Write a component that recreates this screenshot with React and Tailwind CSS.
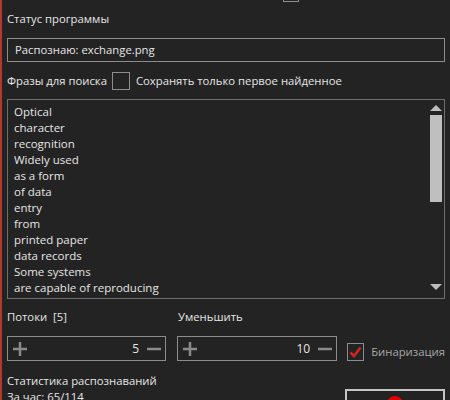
import React from "react";

function Plus() {
  return (
    <svg width="16" height="16" viewBox="0 0 16 16" className="shrink-0">
      <path d="M8 1v14M1 8h14" stroke="#8a8a8a" strokeWidth="2.5" />
    </svg>
  );
}
function Minus() {
  return (
    <svg width="16" height="16" viewBox="0 0 16 16" className="shrink-0">
      <path d="M1 8h14" stroke="#8a8a8a" strokeWidth="2.5" />
    </svg>
  );
}

function Spinner({ value, w }) {
  return (
    <div className={`${w} h-[25px] border border-[#8c8c8c] flex items-center pl-[4px] pr-[3px]`}>
      <Plus />
      <div className="flex-1 text-right pr-[7px] text-[12px]">{value}</div>
      <Minus />
    </div>
  );
}

const lines = [
  "Optical",
  "character",
  "recognition",
  "Widely used",
  "as a form",
  "of data",
  "entry",
  "from",
  "printed paper",
  "data records",
  "Some systems",
  "are capable of reproducing",
];

export default function App() {
  return (
    <div className="w-[450px] h-[400px] overflow-hidden bg-[#232323] border-l-2 border-[#b5382c] font-['Open_Sans',sans-serif] text-[11.3px] text-[#e6e6e6]">
      <div className="h-[4px] relative overflow-hidden">
        <div className="absolute left-[281px] top-[-14px] w-[16px] h-[16px] border border-[#8c8c8c]" />
      </div>
      <div className="pl-[5px] pr-[5px]">
        <div className="mt-[7px] h-[16px] leading-[16px]">Статус программы</div>
        <div className="mt-[11px] h-[24px] border border-[#8c8c8c] flex items-center pl-[7px]">
          Распознаю: exchange.png
        </div>
        <div className="mt-[10px] h-[18px] flex items-center">
          <span>Фразы для поиска</span>
          <div className="ml-[5px] w-[18px] h-[18px] border border-[#8c8c8c]" />
          <span className="ml-[6px]">Сохранять только первое найденное</span>
        </div>
        <div className="mt-[9px] h-[200px] border border-[#6e6e6e] flex">
          <div className="flex-1 pl-[6px] pt-[4px] text-[11.5px] leading-[16px]">
            {lines.map((l) => (
              <div key={l}>{l}</div>
            ))}
          </div>
          <div className="w-[15px] flex flex-col items-center pt-[4px] pb-[7px] pr-[2px]">
            <svg width="12" height="7" viewBox="0 0 12 7">
              <path d="M0 7L6 1L12 7Z" fill="#bdbdbd" />
            </svg>
            <div className="mt-[4px] w-[12px] h-[87px] bg-[#bfbfbf]" />
            <div className="flex-1" />
            <svg width="12" height="7" viewBox="0 0 12 7">
              <path d="M0 0L6 6L12 0Z" fill="#bdbdbd" />
            </svg>
          </div>
        </div>
        <div className="mt-[10px] h-[16px] leading-[16px] flex">
          <div className="w-[171px]">Потоки&nbsp; [5]</div>
          <div>Уменьшить</div>
        </div>
        <div className="mt-[11px] flex items-center">
          <Spinner value="5" w="w-[160px]" />
          <div className="w-[11px]" />
          <Spinner value="10" w="w-[161px]" />
          <div className="ml-[10px] mt-[7px] w-[17px] h-[18px] border border-[#8c8c8c] flex items-center justify-center">
            <svg width="13" height="12" viewBox="0 0 13 12">
              <path d="M1.5 6.5L5 10L11.5 1.5" stroke="#d0261d" strokeWidth="2.6" fill="none" />
            </svg>
          </div>
          <div className="ml-[7px] mt-[7px] text-[#a8a8a8]">Бинаризация</div>
        </div>
        <div className="flex justify-between">
          <div className="mt-[12px] leading-[16px]">
            <div>Статистика распознаваний</div>
            <div>За час: 65/114</div>
          </div>
          <div className="mt-[28px] w-[100px] h-[30px] border-2 border-[#c4c4c4] flex justify-center pt-[5px]">
            <div className="w-[16px] h-[16px] rounded-full bg-[#e00000]" />
          </div>
        </div>
      </div>
    </div>
  );
}
